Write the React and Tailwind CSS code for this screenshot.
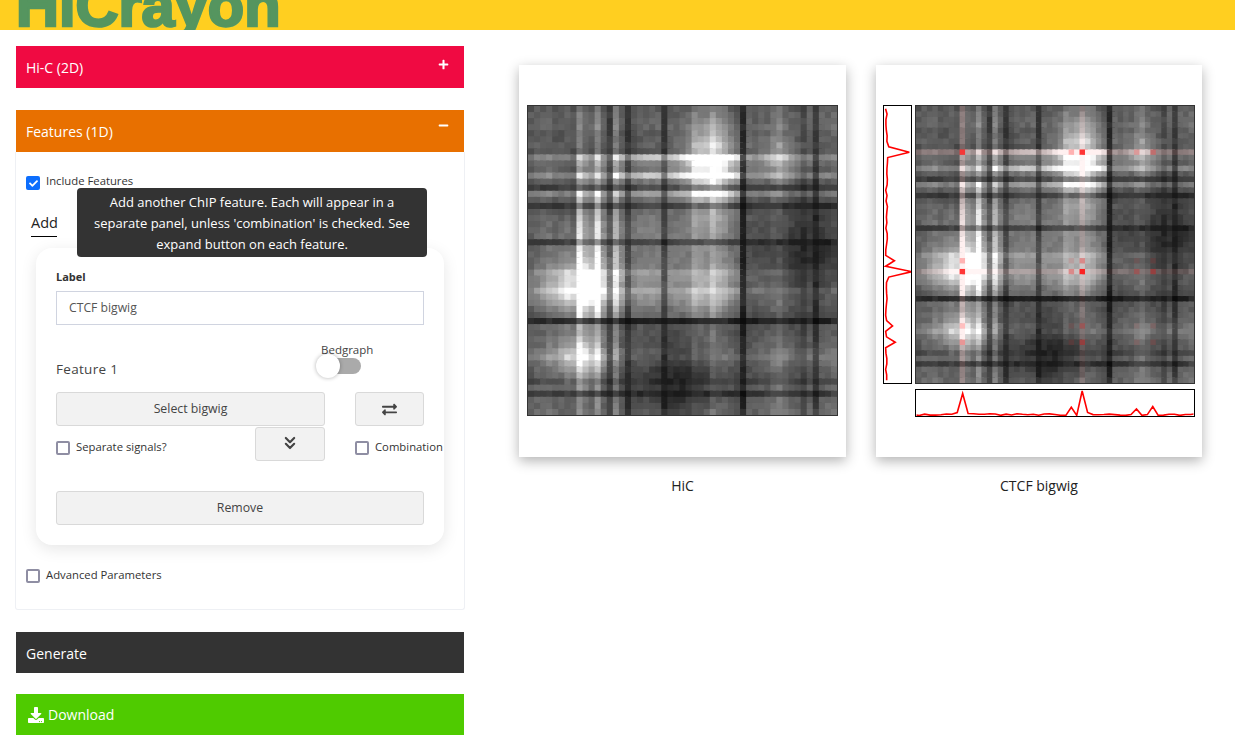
import React from "react";
import { FaPlus, FaMinus, FaExchangeAlt, FaDownload, FaCheck } from "react-icons/fa";
import { ChevronsDown } from "lucide-react";

const N = 51;

// strength of each bin, the matrix is symmetric so one list does rows and columns
const profile = [
    0.58, 0.62, 0.62, 0.64, 0.58, 0.58, 0.6, 0.54, 0.8, 0.66, 0.6, 0.84, 0.58, 0.38, 0.78, 0.56, 0.34,
    0.54, 0.58, 0.6, 0.6, 0.6, 0.34, 0.58, 0.58, 0.6, 0.62, 0.76, 0.72, 0.7, 0.84, 0.74, 0.68, 0.6,
    0.54, 0.24, 0.58, 0.58, 0.6, 0.62, 0.7, 0.76, 0.66, 0.6, 0.56, 0.48, 0.62, 0.36, 0.62, 0.64, 0.68,
];

// row, column, gain, radius
const spots = [
    [8, 30, 1.05, 3.4],
    [30, 8, 1.15, 3.4],
    [41, 8, 1.05, 3],
    [8, 41, 0.5, 2.6],
    [15, 30, 0.35, 3],
    [24, 10, 0.35, 5],
    [45, 25, -0.45, 4.5],
    [25, 45, -0.15, 4.5],
    [24, 48, -0.4, 7],
    [48, 24, -0.15, 7],
];

const peaks = { 8: 0.9, 28: 0.35, 30: 1, 40: 0.28, 43: 0.38 };
const rowTint = { 8: 0.07, 30: 0.05 };

const noise = (i, j) => {
    const a = Math.min(i, j);
    const b = Math.max(i, j);
    const s = Math.sin(a * 127.1 + b * 311.7) * 43758.5453;
    return (s - Math.floor(s) - 0.5) * 0.08;
};

const inBlock = (i) => (i >= 8 && i <= 34 ? 1 : 0.1);

const cellValue = (i, j) => {
    let gain = 1 + 0.32 * inBlock(i) * inBlock(j);
    spots.forEach(([r, c, amp, w]) => {
        const d = (i - r) ** 2 + (j - c) ** 2;
        gain += amp * Math.exp(-d / (2 * w * w));
    });
    let v = profile[i] * profile[j] * gain + noise(i, j);
    if ((i === 8 || i === 11) && j > 13 && j < 35) v += 0.12;
    if ((j === 8 || j === 11) && i > 13 && i < 35) v += 0.12;
    return Math.max(0.02, Math.min(1, v));
};

const cellColor = (i, j, tinted) => {
    const g = cellValue(i, j);
    let a = 0;
    if (tinted) {
        a = (rowTint[i] || 0) + (rowTint[j] || 0) + (peaks[i] || 0) * (peaks[j] || 0) * 0.9;
    }
    const r = Math.round(255 * (g + a * (1 - g) * 0.85));
    const gb = Math.round(255 * g * (1 - a * 0.85));
    return `rgb(${r},${gb},${gb})`;
};

const Heatmap = ({ tinted, className }) => {
    const cells = [];
    for (let i = 0; i < N; i++) {
        for (let j = 0; j < N; j++) {
            // drawn a bit oversize, the next cell paints over the overlap so no seams show
            cells.push(
                <rect
                    key={i * N + j}
                    x={j}
                    y={i}
                    width={j === N - 1 ? 1 : 1.5}
                    height={i === N - 1 ? 1 : 1.5}
                    fill={cellColor(i, j, tinted)}
                />
            );
        }
    }
    return (
        <svg viewBox={`0 0 ${N} ${N}`} preserveAspectRatio="none" className={className}>
            {cells}
        </svg>
    );
};

// signal track, small wiggle plus the peaks
const track = Array.from({ length: N }, (_, i) => {
    const s = Math.sin(i * 91.7) * 4375.5;
    return peaks[i] || 0.02 + (s - Math.floor(s)) * 0.07;
});
track[7] = 0.14;
track[9] = 0.1;
track[31] = 0.14;

const leftPoints = track.map((t, i) => `${1 + t * 27},${((i + 0.5) / N) * 277}`).join(" ");
const bottomPoints = ["0,25", ...track.map((t, i) => `${((i + 0.5) / N) * 277},${26 - t * 25}`), "277,24"].join(" ");

const Checkbox = ({ checked, label, className = "" }) => (
    <label className={`flex items-center gap-[6px] text-[11.3px] leading-[14px] text-[#333] whitespace-nowrap ${className}`}>
        {checked ? (
            <span className="w-[14px] h-[14px] rounded-[2px] bg-[#0d6efd] flex items-center justify-center text-white text-[9px] shrink-0">
                <FaCheck />
            </span>
        ) : (
            <span className="w-[14px] h-[14px] rounded-[2px] border-2 border-[#8f8ea3] bg-white shrink-0" />
        )}
        <span className={checked ? "-mt-[5px]" : "-mt-[3px]"}>{label}</span>
    </label>
);

const GreyButton = ({ children, className = "" }) => (
    <button className={`h-[34px] bg-[#f2f2f2] border border-[#d9d9d9] rounded-[3px] text-[12.3px] text-[#444] flex items-center justify-center ${className}`}>
        {children}
    </button>
);

const App = () => {
    return (
        <div className="bg-white min-h-screen h-[749px] overflow-hidden font-['Open_Sans',sans-serif]">

            {/* HEADER */}
            <header className="h-[30px] bg-[#ffcf20] overflow-hidden pl-[16px]">
                <div className="-mt-[24px] font-['Liberation_Sans',sans-serif] font-bold text-[59.5px] leading-none text-[#55955f] [-webkit-text-stroke:2.5px_#55955f] [text-shadow:1px_1px_0_#b8d45a,-1px_0_0_#b8d45a]">
                    HiCrayon
                </div>
            </header>

            <main className="flex">

                {/* SIDEBAR */}
                <aside className="w-[450px] ml-[15px] pt-[16px] shrink-0">
                    <div className="h-[42px] mx-[1px] bg-[#f00a42] text-white text-[14px] flex justify-between pl-[10px] pr-[15px] pt-[11px]">
                        <span>Hi-C (2D)</span>
                        <FaPlus className="text-[11px] mt-[2px]" />
                    </div>

                    <div className="h-[42px] mx-[1px] mt-[22px] bg-[#e87000] text-white text-[14px] flex justify-between pl-[10px] pr-[15px] pt-[11px]">
                        <span>Features (1D)</span>
                        <FaMinus className="text-[11px] mt-[-1px] " />
                    </div>

                    <div className="relative h-[458px] border border-t-0 border-[#eef0f4] rounded-b-[3px] pt-[24px]">
                        <Checkbox checked label="Include Features" className="ml-[10px]" />

                        <div className="ml-[15px] mt-[21px] w-[26px] h-[26px] border-b border-black text-[14.5px] leading-[24px] text-[#222]">
                            Add
                        </div>

                        {/* tooltip */}
                        <div className="absolute left-[61px] top-[36px] w-[350px] h-[69px] bg-[#333] rounded-[4px] text-white text-[13px] leading-[21px] text-center pt-[4px] z-10">
                            Add another ChIP feature. Each will appear in a<br />
                            separate panel, unless 'combination' is checked. See<br />
                            expand button on each feature.
                        </div>

                        <div className="mx-[20px] mt-[11px] h-[297px] rounded-[16px] bg-white shadow-[0_4px_16px_rgba(0,0,0,0.1)] px-[20px] pt-[21px]">
                            <div className="text-[11px] font-bold text-[#333] leading-[15px]">Label</div>
                            <div className="mt-[7px] h-[34px] border border-[#d0d4e0] text-[12.2px] text-[#555] pl-[12px] pt-[1px] flex items-center">
                                CTCF bigwig
                            </div>

                            <div className="mt-[17px] h-[50px] flex justify-between">
                                <span className="mt-[17px] text-[13.5px] tracking-[0.3px] text-[#444]">Feature 1</span>
                                <div className="w-[103px] shrink-0">
                                    <div className="text-[11.5px] leading-[16px] text-[#444]">Bedgraph</div>
                                    <div className="relative ml-[9px] w-[31px] h-[16px] rounded-full bg-[#aaa]">
                                        <span className="absolute -left-[14px] -top-[4px] w-[24px] h-[24px] rounded-full bg-white shadow-[0_0_4px_rgba(0,0,0,0.3)]" />
                                    </div>
                                </div>
                            </div>

                            <div className="grid grid-cols-[269px_69px] justify-between">
                                <GreyButton className="pt-[1px]">Select bigwig</GreyButton>
                                <GreyButton className="text-[15px]"><FaExchangeAlt /></GreyButton>
                                <div className="flex justify-between items-start">
                                    <Checkbox label="Separate signals?" className="mt-[15px]" />
                                    <GreyButton className="w-[70px] mt-[1px] pb-[2px]"><ChevronsDown size={20} strokeWidth={2.6} /></GreyButton>
                                </div>
                                <Checkbox label="Combination" className="mt-[15px] self-start" />
                            </div>

                            <GreyButton className="w-full mt-[30px]">Remove</GreyButton>
                        </div>

                        <Checkbox label="Advanced Parameters" className="ml-[10px] mt-[24px]" />
                    </div>

                    <div className="h-[41px] mx-[1px] mt-[22px] bg-[#333] text-white text-[14px] pl-[10px] pt-[11px]">
                        Generate
                    </div>

                    <div className="h-[41px] mx-[1px] mt-[21px] bg-[#4fcb00] text-white text-[14px] pl-[12px] flex items-center gap-[4px]">
                        <FaDownload className="text-[16px]" />
                        <span>Download</span>
                    </div>
                </aside>

                {/* PLOTS */}
                <section className="flex pt-[35px] ml-[54px] gap-[30px]">
                    <div className="w-[327px]">
                        <div className="h-[392px] bg-white shadow-[0_4px_12px_rgba(0,0,0,0.3)] pt-[40px] px-[8px]">
                            <div className="w-[311px] h-[311px] border border-[#333]">
                                <Heatmap className="block w-full h-full" />
                            </div>
                        </div>
                        <p className="mt-[18px] text-center text-[14px] text-[#222]">HiC</p>
                    </div>

                    <div className="w-[326px]">
                        <div className="h-[392px] bg-white shadow-[0_4px_12px_rgba(0,0,0,0.3)] pt-[40px] pl-[7px]">
                            <div className="grid grid-cols-[29px_280px] gap-x-[3px] gap-y-[5px]">
                                <div className="h-[279px] border border-black">
                                    <svg viewBox="0 0 27 277" className="block w-full h-full">
                                        <polyline points={leftPoints} fill="none" stroke="#ff0000" strokeWidth="1.6" />
                                    </svg>
                                </div>
                                <div className="h-[279px] border border-[#333]">
                                    <Heatmap tinted className="block w-full h-full" />
                                </div>
                                <div />
                                <div className="h-[28px] border border-black">
                                    <svg viewBox="0 0 277 26" className="block w-full h-full">
                                        <polyline points={bottomPoints} fill="none" stroke="#ff0000" strokeWidth="1.6" />
                                    </svg>
                                </div>
                            </div>
                        </div>
                        <p className="mt-[18px] text-center text-[14px] text-[#222]">CTCF bigwig</p>
                    </div>
                </section>

            </main>
        </div>
    );
};

export default App;
